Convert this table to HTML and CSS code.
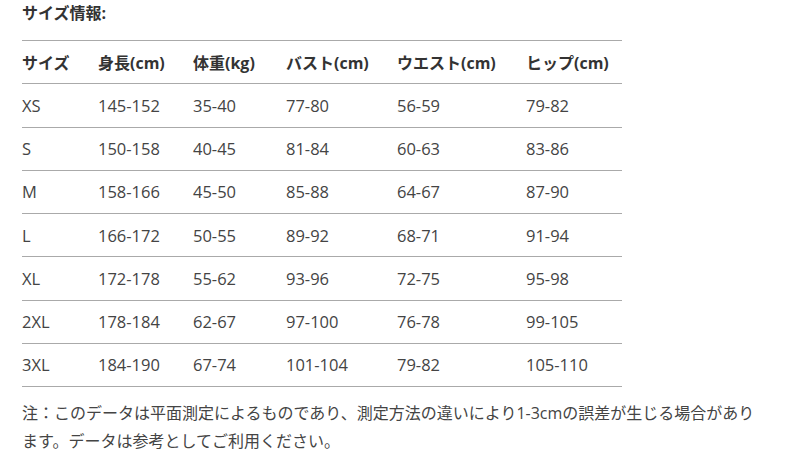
FILE: index.html
```html
<!DOCTYPE html>
<html lang="ja">
<head>
<meta charset="utf-8">
<link rel="stylesheet" href="styles.css">
</head>
<body>
<div class="page">
  <h2 class="title">サイズ情報:</h2>
  <table class="size-table">
    <colgroup>
      <col class="c1"><col class="c2"><col class="c3"><col class="c4"><col class="c5"><col class="c6">
    </colgroup>
    <thead>
      <tr><th>サイズ</th><th>身長(cm)</th><th>体重(kg)</th><th>バスト(cm)</th><th>ウエスト(cm)</th><th>ヒップ(cm)</th></tr>
    </thead>
    <tbody>
      <tr><td>XS</td><td>145-152</td><td>35-40</td><td>77-80</td><td>56-59</td><td>79-82</td></tr>
      <tr><td>S</td><td>150-158</td><td>40-45</td><td>81-84</td><td>60-63</td><td>83-86</td></tr>
      <tr><td>M</td><td>158-166</td><td>45-50</td><td>85-88</td><td>64-67</td><td>87-90</td></tr>
      <tr><td>L</td><td>166-172</td><td>50-55</td><td>89-92</td><td>68-71</td><td>91-94</td></tr>
      <tr><td>XL</td><td>172-178</td><td>55-62</td><td>93-96</td><td>72-75</td><td>95-98</td></tr>
      <tr><td>2XL</td><td>178-184</td><td>62-67</td><td>97-100</td><td>76-78</td><td>99-105</td></tr>
      <tr><td>3XL</td><td>184-190</td><td>67-74</td><td>101-104</td><td>79-82</td><td>105-110</td></tr>
    </tbody>
  </table>
  <p class="note">注：このデータは平面測定によるものであり、測定方法の違いにより1-3cmの誤差が生じる場合があります。データは参考としてご利用ください。</p>
</div>
</body>
</html>
```

FILE: styles.css
```css
html, body {
  margin: 0;
  padding: 0;
  background: #ffffff;
}
.page {
  padding: 0 22px;
  width: 740px;
  font-family: "Open Sans", "Noto Sans CJK JP", sans-serif;
  color: #444444;
  font-size: 16px;
}
.title {
  margin: 0 0 14px 0;
  font-size: 16px;
  line-height: 26px;
  font-weight: 700;
  color: #333333;
}
.size-table {
  width: 600px;
  table-layout: fixed;
  border-collapse: collapse;
  border-top: 1px solid #aaaaaa;
}
.c1 { width: 76px; }
.c2 { width: 95px; }
.c3 { width: 93px; }
.c4 { width: 111px; }
.c5 { width: 129px; }
.c6 { width: 96px; }
.size-table th,
.size-table td {
  padding: 0;
  height: 42.25px;
  text-align: left;
  vertical-align: middle;
  border-bottom: 1px solid #aaaaaa;
  white-space: nowrap;
  font-size: 16px;
}
.size-table td {
  font-size: 16.5px;
}
.size-table th {
  font-weight: 700;
  color: #333333;
}
.note {
  margin: 12px 0 0 0;
  font-size: 16px;
  line-height: 28px;
  color: #444444;
}
```
